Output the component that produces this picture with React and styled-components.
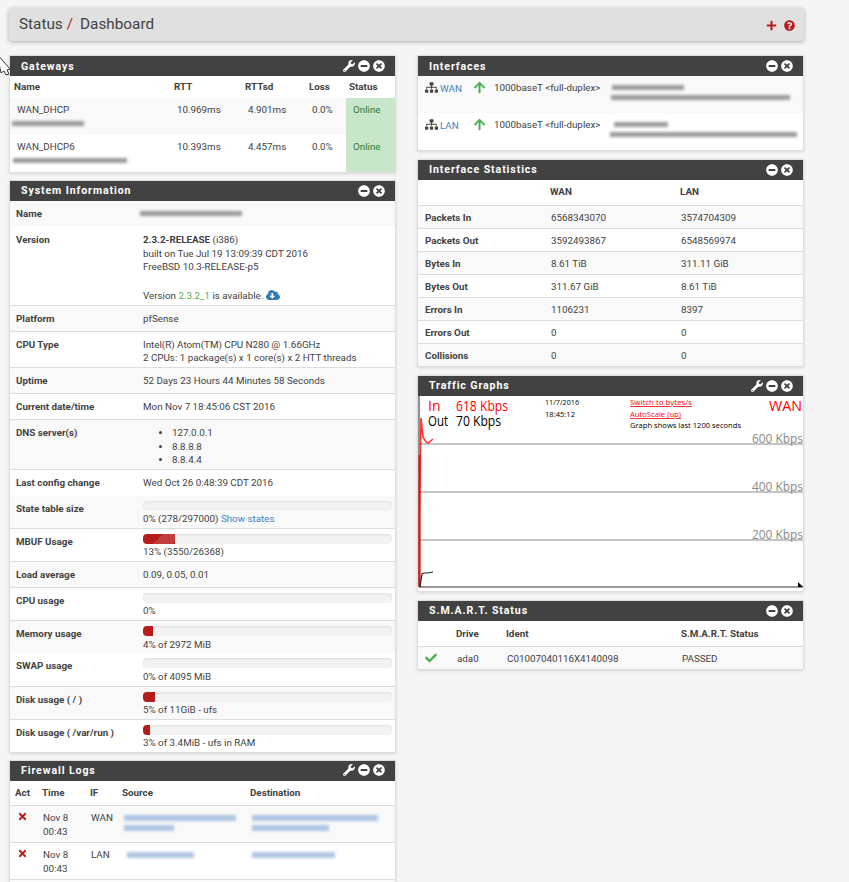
import React from "react";
import styled, { createGlobalStyle } from "styled-components";
import {
  FaArrowUp,
  FaCheck,
  FaCloudDownloadAlt,
  FaMinusCircle,
  FaPlus,
  FaQuestionCircle,
  FaSitemap,
  FaTimes,
  FaTimesCircle,
  FaWrench,
} from "react-icons/fa";

const GlobalStyle = createGlobalStyle`
  html, body {
    margin: 0;
    height: 100%;
    overflow: hidden;
    background: #f5f5f5;
  }
  * {
    box-sizing: border-box;
  }
`;

const Page = styled.div`
  position: relative;
  height: 882px;
  overflow: hidden;
  padding: 8px 0 0 9px;
  font-family: Roboto, "Liberation Sans", sans-serif;
  font-size: 9.8px;
  line-height: 13.7px;
  color: #424242;
`;

const TitleBar = styled.div`
  width: 795px;
  height: 33px;
  margin-bottom: 14px;
  padding: 1px 9px 0 10px;
  display: flex;
  align-items: center;
  justify-content: space-between;
  background: #e0e0e0;
  border-radius: 3px;
  box-shadow: 0 1px 4px rgba(0, 0, 0, 0.3);
  font-size: 15.3px;
  color: #424242;
`;

const Slash = styled.span`
  color: #b71c1c;
  margin: 0 7px 0 4px;
`;

const TitleIcons = styled.div`
  display: flex;
  align-items: center;
  gap: 7px;
  color: #b71c1c;
  font-size: 11px;
`;

const Columns = styled.div`
  display: grid;
  grid-template-columns: 387px 387px;
  column-gap: 21px;
  align-items: start;
`;

const Column = styled.div`
  display: flex;
  flex-direction: column;
  gap: ${(p) => p.$gap}px;
`;

const PanelBox = styled.section`
  background: #fff;
  border: 1px solid #ddd;
  box-shadow: 0 1px 3px rgba(0, 0, 0, 0.12);
`;

const PanelHead = styled.header`
  height: 20px;
  padding: ${(p) => (p.$first ? 1 : 0)}px 10px 0 11px;
  display: flex;
  align-items: center;
  justify-content: space-between;
  background: #424242;
  color: #fff;
`;

const PanelTitle = styled.h2`
  margin: 0;
  font-size: 10.6px;
  font-weight: 700;
  letter-spacing: 0.9px;
`;

const PanelIcons = styled.div`
  display: flex;
  align-items: center;
  gap: 3px;
  margin-top: -1px;
  font-size: 12px;
  svg {
    display: block;
  }
`;

const Table = styled.table`
  width: 100%;
  table-layout: fixed;
  border-collapse: collapse;
`;

const Col = styled.col`
  width: ${(p) => p.$w}px;
`;

const Row = styled.tr`
  background: ${(p) => (p.$shade ? "#f9f9f9" : "#fff")};
  border-top: ${(p) => (p.$plain ? "none" : "1px solid #ddd")};
`;

const HeadRow = styled.tr`
  height: ${(p) => p.$h || 25}px;
  border-bottom: ${(p) => (p.$plain ? "none" : "1px solid #ddd")};
`;

const Th = styled.th`
  padding: ${(p) => p.$top ?? 0}px 0 0 ${(p) => p.$pad ?? 4}px;
  text-align: left;
  font-weight: 700;
  vertical-align: middle;
`;

const Td = styled.td`
  height: ${(p) => p.$h || 23}px;
  padding: ${(p) => p.$top ?? 5}px 3px 2px ${(p) => p.$pad ?? 5}px;
  vertical-align: top;
  white-space: nowrap;
  font-weight: ${(p) => (p.$bold ? 700 : 400)};
  background: ${(p) => p.$bg || "transparent"};
  color: ${(p) => p.$color || "inherit"};
`;

const Smudge = styled.div`
  width: ${(p) => p.$w}px;
  height: ${(p) => (p.$blue ? 6 : 5)}px;
  margin: ${(p) => (p.$blue ? "3.5px 0 4.2px" : "4px 0 4.7px")} ${(p) => p.$x || 0}px;
  margin-right: 0;
  background: ${(p) => (p.$blue ? "#afc5e2" : "#9a9a9a")};
  filter: blur(1.5px);
`;

const Link = styled.a`
  color: ${(p) => p.$color || "#3f82c4"};
  text-decoration: none;
`;

const IconBox = styled.span`
  display: inline-block;
  vertical-align: ${(p) => p.$v ?? -1}px;
  margin: ${(p) => p.$margin || 0};
  color: ${(p) => p.$color || "inherit"};
  font-size: ${(p) => p.$size || 12}px;
  line-height: 1;
  svg {
    display: block;
  }
`;

const Track = styled.div`
  height: 10px;
  margin: -1px 0 1.5px;
  background: #f2f2f2;
  border-radius: 4px;
  box-shadow: inset 0 1px 2px rgba(0, 0, 0, 0.08);
  overflow: hidden;
`;

const Fill = styled.div`
  height: 100%;
  background-color: #b71c1c;
  background-image: linear-gradient(
    -45deg,
    rgba(255, 255, 255, 0.15) 25%,
    transparent 25%,
    transparent 50%,
    rgba(255, 255, 255, 0.15) 50%,
    rgba(255, 255, 255, 0.15) 75%,
    transparent 75%
  );
  background-size: 40px 40px;
`;

const DnsList = styled.ul`
  margin: 0;
  padding-left: 29px;
`;

const GraphBody = styled.div`
  height: 195px;
  svg {
    display: block;
  }
`;

const Cursor = styled.svg`
  position: absolute;
  left: 0;
  top: 56px;
`;

const gateways = [
  { name: "WAN_DHCP", rtt: "10.969ms", rttsd: "4.901ms", loss: "0.0%", w: 72, x: -5 },
  { name: "WAN_DHCP6", rtt: "10.393ms", rttsd: "4.457ms", loss: "0.0%", w: 114, x: -4 },
];

const interfaces = [
  { name: "WAN", a: 72, ax: 2, b: 179, bx: 1 },
  { name: "LAN", a: 54, ax: 4, b: 187, bx: 0 },
];

const stats = [
  ["Packets In", "6568343070", "3574704309"],
  ["Packets Out", "3592493867", "6548569974"],
  ["Bytes In", "8.61 TiB", "311.11 GiB"],
  ["Bytes Out", "311.67 GiB", "8.61 TiB"],
  ["Errors In", "1106231", "8397"],
  ["Errors Out", "0", "0"],
  ["Collisions", "0", "0"],
];

function Panel({ title, wrench, first, children }) {
  return (
    <PanelBox>
      <PanelHead $first={first}>
        <PanelTitle>{title}</PanelTitle>
        <PanelIcons>
          {wrench && <FaWrench />}
          <FaMinusCircle />
          <FaTimesCircle />
        </PanelIcons>
      </PanelHead>
      {children}
    </PanelBox>
  );
}

function Cols({ widths }) {
  return (
    <colgroup>
      {widths.map((w, i) => (
        <Col key={i} $w={w} />
      ))}
    </colgroup>
  );
}

function Gateways() {
  return (
    <Panel title="Gateways" wrench first>
      <Table>
        <Cols widths={[161, 71, 64, 40, 49]} />
        <thead>
          <HeadRow $h={22} $plain>
            <Th>Name</Th>
            <Th $pad={3}>RTT</Th>
            <Th $pad={3}>RTTsd</Th>
            <Th $pad={3}>Loss</Th>
            <Th $pad={3}>Status</Th>
          </HeadRow>
        </thead>
        <tbody>
          {gateways.map((g, i) => (
            <Row key={g.name} $shade={i === 0} $plain>
              <Td $pad={7} $h={37}>
                {g.name}
                <Smudge $w={g.w} $x={g.x} />
              </Td>
              <Td $pad={6}>{g.rtt}</Td>
              <Td $pad={6}>{g.rttsd}</Td>
              <Td $pad={6}>{g.loss}</Td>
              <Td $pad={7} $bg="#c8e6c9" $color="#2e7d32">
                Online
              </Td>
            </Row>
          ))}
        </tbody>
      </Table>
    </Panel>
  );
}

function InfoRow({ label, shade, plain, children }) {
  return (
    <Row $shade={shade} $plain={plain}>
      <Td $pad={6} $top={6} $bold $h={26}>
        {label}
      </Td>
      <Td $pad={6} $top={6} $h={26}>
        {children}
      </Td>
    </Row>
  );
}

function Usage({ pct, children }) {
  return (
    <>
      <Track>
        <Fill style={{ width: `${pct}%` }} />
      </Track>
      {children}
    </>
  );
}

function SystemInfo() {
  return (
    <Panel title="System Information">
      <Table>
        <Cols widths={[127, 258]} />
        <tbody>
          <InfoRow label="Name" shade plain>
            <Smudge $w={102} $x={-3} />
          </InfoRow>
          <InfoRow label="Version" plain>
            <b>2.3.2-RELEASE</b> (i386)
            <br />
            built on Tue Jul 19 13:09:39 CDT 2016
            <br />
            FreeBSD 10.3-RELEASE-p5
            <br />
            <br />
            Version <Link $color="#4caf50">2.3.2_1</Link> is available.{" "}
            <IconBox $color="#337ab7" $size={14} $v={-3}>
              <FaCloudDownloadAlt />
            </IconBox>
          </InfoRow>
          <InfoRow label="Platform" shade>
            pfSense
          </InfoRow>
          <InfoRow label="CPU Type">
            Intel(R) Atom(TM) CPU N280 @ 1.66GHz
            <br />2 CPUs: 1 package(s) x 1 core(s) x 2 HTT threads
          </InfoRow>
          <InfoRow label="Uptime" shade>
            52 Days 23 Hours 44 Minutes 58 Seconds
          </InfoRow>
          <InfoRow label="Current date/time">Mon Nov 7 18:45:06 CST 2016</InfoRow>
          <InfoRow label="DNS server(s)" shade>
            <DnsList>
              <li>127.0.0.1</li>
              <li>8.8.8.8</li>
              <li>8.8.4.4</li>
            </DnsList>
          </InfoRow>
          <InfoRow label="Last config change">Wed Oct 26 0:48:39 CDT 2016</InfoRow>
          <InfoRow label="State table size" shade plain>
            <Usage pct={0}>
              0% (278/297000) <Link>Show states</Link>
            </Usage>
          </InfoRow>
          <InfoRow label="MBUF Usage">
            <Usage pct={13}>13% (3550/26368)</Usage>
          </InfoRow>
          <InfoRow label="Load average" shade>
            0.09, 0.05, 0.01
          </InfoRow>
          <InfoRow label="CPU usage">
            <Usage pct={0}>0%</Usage>
          </InfoRow>
          <InfoRow label="Memory usage" shade>
            <Usage pct={4}>4% of 2972 MiB</Usage>
          </InfoRow>
          <InfoRow label="SWAP usage" plain>
            <Usage pct={0}>0% of 4095 MiB</Usage>
          </InfoRow>
          <InfoRow label="Disk usage ( / )" shade>
            <Usage pct={5}>5% of 11GiB - ufs</Usage>
          </InfoRow>
          <InfoRow label="Disk usage ( /var/run )">
            <Usage pct={3}>3% of 3.4MiB - ufs in RAM</Usage>
          </InfoRow>
        </tbody>
      </Table>
    </Panel>
  );
}

function FirewallLogs() {
  const rows = [
    { iface: "WAN", src: [112, 50], srcX: 1, dst: [126, 77], shade: true },
    { iface: "LAN", src: [67], srcX: 4, dst: [83], shade: false },
  ];
  return (
    <Panel title="Firewall Logs" wrench>
      <Table>
        <Cols widths={[28, 48, 32, 128, 149]} />
        <thead>
          <HeadRow>
            <Th $pad={5}>Act</Th>
            <Th>Time</Th>
            <Th>IF</Th>
            <Th>Source</Th>
            <Th>Destination</Th>
          </HeadRow>
        </thead>
        <tbody>
          {rows.map((r) => (
            <Row key={r.iface} $shade={r.shade}>
              <Td $pad={7}>
                <IconBox $color="#b71c1c" $size={11} $v={0}>
                  <FaTimes />
                </IconBox>
              </Td>
              <Td $h={37}>
                Nov 8
                <br />
                00:43
              </Td>
              <Td>{r.iface}</Td>
              <Td>
                {r.src.map((w) => (
                  <Smudge key={w} $w={w} $x={r.srcX} $blue />
                ))}
              </Td>
              <Td>
                {r.dst.map((w) => (
                  <Smudge key={w} $w={w} $x={1} $blue />
                ))}
              </Td>
            </Row>
          ))}
          <Row $shade>
            <Td $h={37} />
            <Td />
            <Td />
            <Td />
            <Td />
          </Row>
        </tbody>
      </Table>
    </Panel>
  );
}

function Interfaces() {
  return (
    <Panel title="Interfaces" first>
      <Table>
        <Cols widths={[50, 21, 116, 198]} />
        <tbody>
          {interfaces.map((n, i) => (
            <Row key={n.name} $shade={i === 0} $plain>
              <Td $pad={7} $h={37}>
                <IconBox $size={13} $v={-2} $margin="0 2px 0 0">
                  <FaSitemap />
                </IconBox>
                <Link>{n.name}</Link>
              </Td>
              <Td $pad={5}>
                <IconBox $color="#4caf50" $size={13} $v={-1}>
                  <FaArrowUp />
                </IconBox>
              </Td>
              <Td $pad={5}>1000baseT &lt;full-duplex&gt;</Td>
              <Td>
                <Smudge $w={n.a} $x={n.ax} />
                <Smudge $w={n.b} $x={n.bx} />
              </Td>
            </Row>
          ))}
        </tbody>
      </Table>
    </Panel>
  );
}

function InterfaceStats() {
  return (
    <Panel title="Interface Statistics">
      <Table>
        <Cols widths={[126, 130, 129]} />
        <thead>
          <HeadRow>
            <Th />
            <Th $pad={6}>WAN</Th>
            <Th $pad={6}>LAN</Th>
          </HeadRow>
        </thead>
        <tbody>
          {stats.map(([label, wan, lan], i) => (
            <Row key={label} $shade={i % 2 === 0}>
              <Td $pad={7} $top={5} $bold>
                {label}
              </Td>
              <Td $pad={7} $top={5}>
                {wan}
              </Td>
              <Td $pad={7} $top={5}>
                {lan}
              </Td>
            </Row>
          ))}
        </tbody>
      </Table>
    </Panel>
  );
}

const graphFont = "'Open Sans', 'DejaVu Sans', sans-serif";

function TrafficGraph() {
  return (
    <GraphBody>
      <svg width="385" height="195" viewBox="0 1 385 195" fontFamily={graphFont}>
        {[49, 97, 145].map((y) => (
          <line key={y} x1="1" x2="385" y1={y} y2={y} stroke="#c4c4c4" strokeWidth="2" />
        ))}
        <line x1="1" x2="1" y1="1" y2="192" stroke="#222" strokeWidth="1" />
        <line x1="1" x2="385" y1="192" y2="192" stroke="#333" strokeWidth="1" />
        <path d="M1.5 192 L1.5 120 L3 23 L5 42 L8 47 L10 48 L15 44" fill="none" stroke="#f33" strokeWidth="1.6" />
        <line x1="1.5" x2="1.5" y1="60" y2="192" stroke="#e01010" strokeWidth="2" />
        <path d="M2 192 L4 179 L6 178 L10 178 L15 177" fill="none" stroke="#222" strokeWidth="1.2" />
        <path d="M380 187 L385 192 L380 192 Z" fill="#000" />

        <text x="10" y="16" fontSize="14" fill="#f00">In</text>
        <text x="38" y="16" fontSize="14" fill="#f00" textLength="52" lengthAdjust="spacingAndGlyphs">618 Kbps</text>
        <text x="10" y="31" fontSize="14" fill="#000" textLength="20" lengthAdjust="spacingAndGlyphs">Out</text>
        <text x="38" y="31" fontSize="14" fill="#000" textLength="45" lengthAdjust="spacingAndGlyphs">70 Kbps</text>

        <text x="127" y="10" fontSize="8" fill="#000" textLength="34" lengthAdjust="spacingAndGlyphs">11/7/2016</text>
        <text x="127" y="22" fontSize="8" fill="#000" textLength="30" lengthAdjust="spacingAndGlyphs">18:45:12</text>

        <text x="212" y="10" fontSize="8" fill="#f00" textDecoration="underline" textLength="62" lengthAdjust="spacingAndGlyphs">Switch to bytes/s</text>
        <text x="212" y="22" fontSize="8" fill="#f00" textDecoration="underline" textLength="51" lengthAdjust="spacingAndGlyphs">AutoScale (up)</text>
        <text x="212" y="33" fontSize="8" fill="#000" textLength="111" lengthAdjust="spacingAndGlyphs">Graph shows last 1200 seconds</text>

        <text x="351" y="16" fontSize="15" fill="#f00" textLength="33" lengthAdjust="spacingAndGlyphs">WAN</text>

        <text x="334" y="48" fontSize="12" fill="#888" textLength="51" lengthAdjust="spacingAndGlyphs">600 Kbps</text>
        <text x="334" y="96" fontSize="12" fill="#888" textLength="51" lengthAdjust="spacingAndGlyphs">400 Kbps</text>
        <text x="334" y="144" fontSize="12" fill="#888" textLength="51" lengthAdjust="spacingAndGlyphs">200 Kbps</text>
      </svg>
    </GraphBody>
  );
}

function SmartStatus() {
  return (
    <Panel title="S.M.A.R.T. Status">
      <Table>
        <Cols widths={[34, 50, 175, 126]} />
        <thead>
          <HeadRow>
            <Th />
            <Th $top={1}>Drive</Th>
            <Th $top={1}>Ident</Th>
            <Th $top={1}>S.M.A.R.T. Status</Th>
          </HeadRow>
        </thead>
        <tbody>
          <Row $shade>
            <Td $pad={7}>
              <IconBox $color="#4caf50" $size={12} $v={-1}>
                <FaCheck />
              </IconBox>
            </Td>
            <Td>ada0</Td>
            <Td>C01007040116X4140098</Td>
            <Td>PASSED</Td>
          </Row>
        </tbody>
      </Table>
    </Panel>
  );
}

export default function App() {
  return (
    <Page>
      <GlobalStyle />
      <TitleBar>
        <div>
          <span>Status</span>
          <Slash>/</Slash>
          <span>Dashboard</span>
        </div>
        <TitleIcons>
          <FaPlus />
          <FaQuestionCircle />
        </TitleIcons>
      </TitleBar>
      <Columns>
        <Column $gap={7}>
          <Gateways />
          <SystemInfo />
          <FirewallLogs />
        </Column>
        <Column $gap={8}>
          <Interfaces />
          <InterfaceStats />
          <Panel title="Traffic Graphs" wrench>
            <TrafficGraph />
          </Panel>
          <SmartStatus />
        </Column>
      </Columns>
      <Cursor width="12" height="20" viewBox="0 0 12 20">
        <path d="M-3 -2 L10 13 L7 14 L9 18 L6 19 L4 15 L1 17 Z" fill="#fff" stroke="#333" strokeWidth="1" />
      </Cursor>
    </Page>
  );
}
